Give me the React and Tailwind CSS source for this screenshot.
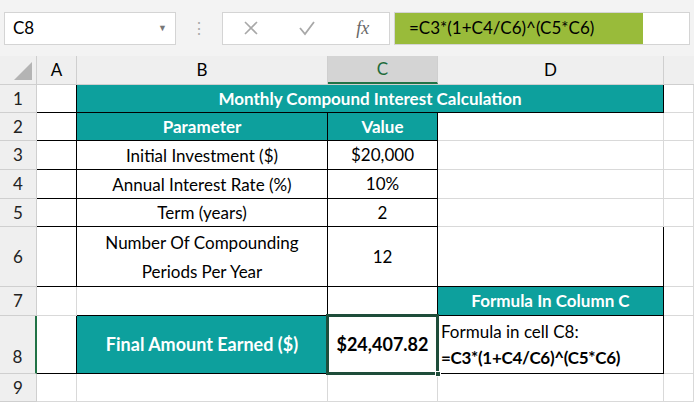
import React from 'react';

const F = { fontFamily: 'Lato, "Open Sans", sans-serif' };
const W = [37, 40, 251, 110, 226, 30];
const H = [28, 28, 29, 29, 28, 60, 29, 58, 28];

const Cell = ({ w, h, cls = '', children }) => (
  <div className={`shrink-0 flex items-center justify-center border-r border-b ${cls}`} style={{ width: w, height: h }}>
    {children}
  </div>
);

const G = 'border-[#d9d9d9]';
const B = 'border-black';
const TEAL = 'bg-[#0da09d] text-white font-bold';

export default function App() {
  const rows = [
    // [B content, C content, D content, classes]
  ];
  const hdr = (n, i) => (
    <Cell w={W[0]} h={H[i]} cls={`bg-[#efefef] border-[#cfcfcf] text-[17px] text-[#222] ${n === 8 ? 'items-end pb-1 text-[#1d6b3a] bg-[#d8d8d8] border-r-2 border-r-[#217346]' : ''}`}>{n}</Cell>
  );
  return (
    <div className="w-[694px] h-[402px] overflow-hidden bg-white text-black" style={F}>
      {/* formula bar */}
      <div className="h-[56px] bg-[#f3f3f3] flex items-center px-[4px] gap-0">
        <div className="w-[172px] h-[33px] bg-white border border-[#d4d4d4] flex items-center justify-between px-2">
          <span className="text-[17px]">C8</span>
          <span className="text-[9px] text-[#777]">▼</span>
        </div>
        <div className="w-[46px] flex justify-center text-[#aaa] text-[16px] leading-none">⋮</div>
        <div className="w-[168px] h-[33px] bg-white border border-[#d4d4d4] flex items-center justify-around text-[#9a9a9a]">
          <svg width="16" height="16" viewBox="0 0 16 16"><path d="M2 2L14 14M14 2L2 14" stroke="#a8a8a8" strokeWidth="1.6" /></svg>
          <svg width="18" height="16" viewBox="0 0 18 16"><path d="M2 8L7 14L16 2" stroke="#a8a8a8" strokeWidth="1.8" fill="none" /></svg>
          <span className="italic text-[18px] text-[#666]" style={{ fontFamily: '"Liberation Serif", serif' }}>fx</span>
        </div>
        <div className="flex-1 h-[33px] bg-white border border-[#d4d4d4] ml-[4px] flex items-center">
          <div className="h-full w-[248px] bg-[#99bb3a] flex items-center px-[14px] text-[17px]">=C3*(1+C4/C6)^(C5*C6)</div>
        </div>
      </div>
      {/* column headers */}
      <div className="flex h-[29px] bg-[#efefef] text-[17px] border-b border-[#cfcfcf]">
        <div className="w-[37px] border-r border-[#cfcfcf] relative">
          <svg className="absolute right-1 bottom-1" width="18" height="18"><path d="M18 0L18 18L0 18Z" fill="#b4b4b4" /></svg>
        </div>
        <div className="w-[40px] border-r border-[#cfcfcf] flex items-center justify-center">A</div>
        <div className="w-[251px] border-r border-[#cfcfcf] flex items-center justify-center">B</div>
        <div className="w-[110px] border-r border-[#cfcfcf] flex items-center justify-center bg-[#d4d4d4] text-[#1d6b3a] border-b-2 border-b-[#217346]">C</div>
        <div className="w-[226px] border-r border-[#cfcfcf] flex items-center justify-center">D</div>
        <div className="flex-1" />
      </div>
      {/* row 1 */}
      <div className="flex">
        {hdr(1, 0)}
        <Cell w={W[1]} h={H[0]} cls={B} />
        <Cell w={W[2] + W[3] + W[4]} h={H[0]} cls={`${B} ${TEAL} text-[17px]`}>Monthly Compound Interest Calculation</Cell>
        <Cell w={W[5]} h={H[0]} cls={G} />
      </div>
      <div className="flex">
        {hdr(2, 1)}
        <Cell w={W[1]} h={H[1]} cls={B} />
        <Cell w={W[2]} h={H[1]} cls={`${B} ${TEAL} text-[17px]`}>Parameter</Cell>
        <Cell w={W[3]} h={H[1]} cls={`${B} ${TEAL} text-[17px]`}>Value</Cell>
        <Cell w={W[4]} h={H[1]} cls={G} />
        <Cell w={W[5]} h={H[1]} cls={G} />
      </div>
      {[
        ['Initial Investment ($)', '$20,000'],
        ['Annual Interest Rate (%)', '10%'],
        ['Term (years)', '2'],
        ['Number Of Compounding\nPeriods Per Year', '12'],
      ].map(([b, c], i) => (
        <div className="flex" key={i}>
          {hdr(i + 3, i + 2)}
          <Cell w={W[1]} h={H[i + 2]} cls={B} />
          <Cell w={W[2]} h={H[i + 2]} cls={`${B} text-[17px] text-center whitespace-pre-line leading-[29px]`}>{b}</Cell>
          <Cell w={W[3]} h={H[i + 2]} cls={`${B} text-[17px]`}>{c}</Cell>
          <Cell w={W[4]} h={H[i + 2]} cls={i === 3 ? B : G} />
          <Cell w={W[5]} h={H[i + 2]} cls={G} />
        </div>
      ))}
      <div className="flex">
        {hdr(7, 6)}
        <Cell w={W[1]} h={H[6]} cls={G} />
        <Cell w={W[2]} h={H[6]} cls={B} />
        <Cell w={W[3]} h={H[6]} cls={B} />
        <Cell w={W[4]} h={H[6]} cls={`${B} ${TEAL} text-[17px]`}>Formula In Column C</Cell>
        <Cell w={W[5]} h={H[6]} cls={G} />
      </div>
      <div className="flex">
        {hdr(8, 7)}
        <Cell w={W[1]} h={H[7]} cls={B} />
        <Cell w={W[2]} h={H[7]} cls={`${B} ${TEAL} text-[18px]`}>Final Amount Earned ($)</Cell>
        <div className="shrink-0 relative border-b border-r border-black" style={{ width: W[3], height: H[7] }}>
          <div className="absolute -left-[2px] -top-[2px] -right-[2px] -bottom-[2px] border-[3px] border-[#1e4d3a] flex items-center justify-center font-bold text-[18px]">$24,407.82</div>
          <div className="absolute -right-[4px] -bottom-[4px] w-[6px] h-[6px] bg-[#1e4d3a] border border-white" />
        </div>
        <div className="shrink-0 border-r border-b border-black flex flex-col justify-center pl-[3px] text-[17px] leading-[26px]" style={{ width: W[4], height: H[7] }}>
          <span>Formula in cell C8:</span>
          <span className="font-bold tracking-[-0.3px]">=C3*(1+C4/C6)^(C5*C6)</span>
        </div>
        <Cell w={W[5]} h={H[7]} cls={G} />
      </div>
      <div className="flex">
        {hdr(9, 8)}
        {W.slice(1).map((w, i) => <Cell key={i} w={w} h={H[8]} cls={G} />)}
      </div>
    </div>
  );
}
